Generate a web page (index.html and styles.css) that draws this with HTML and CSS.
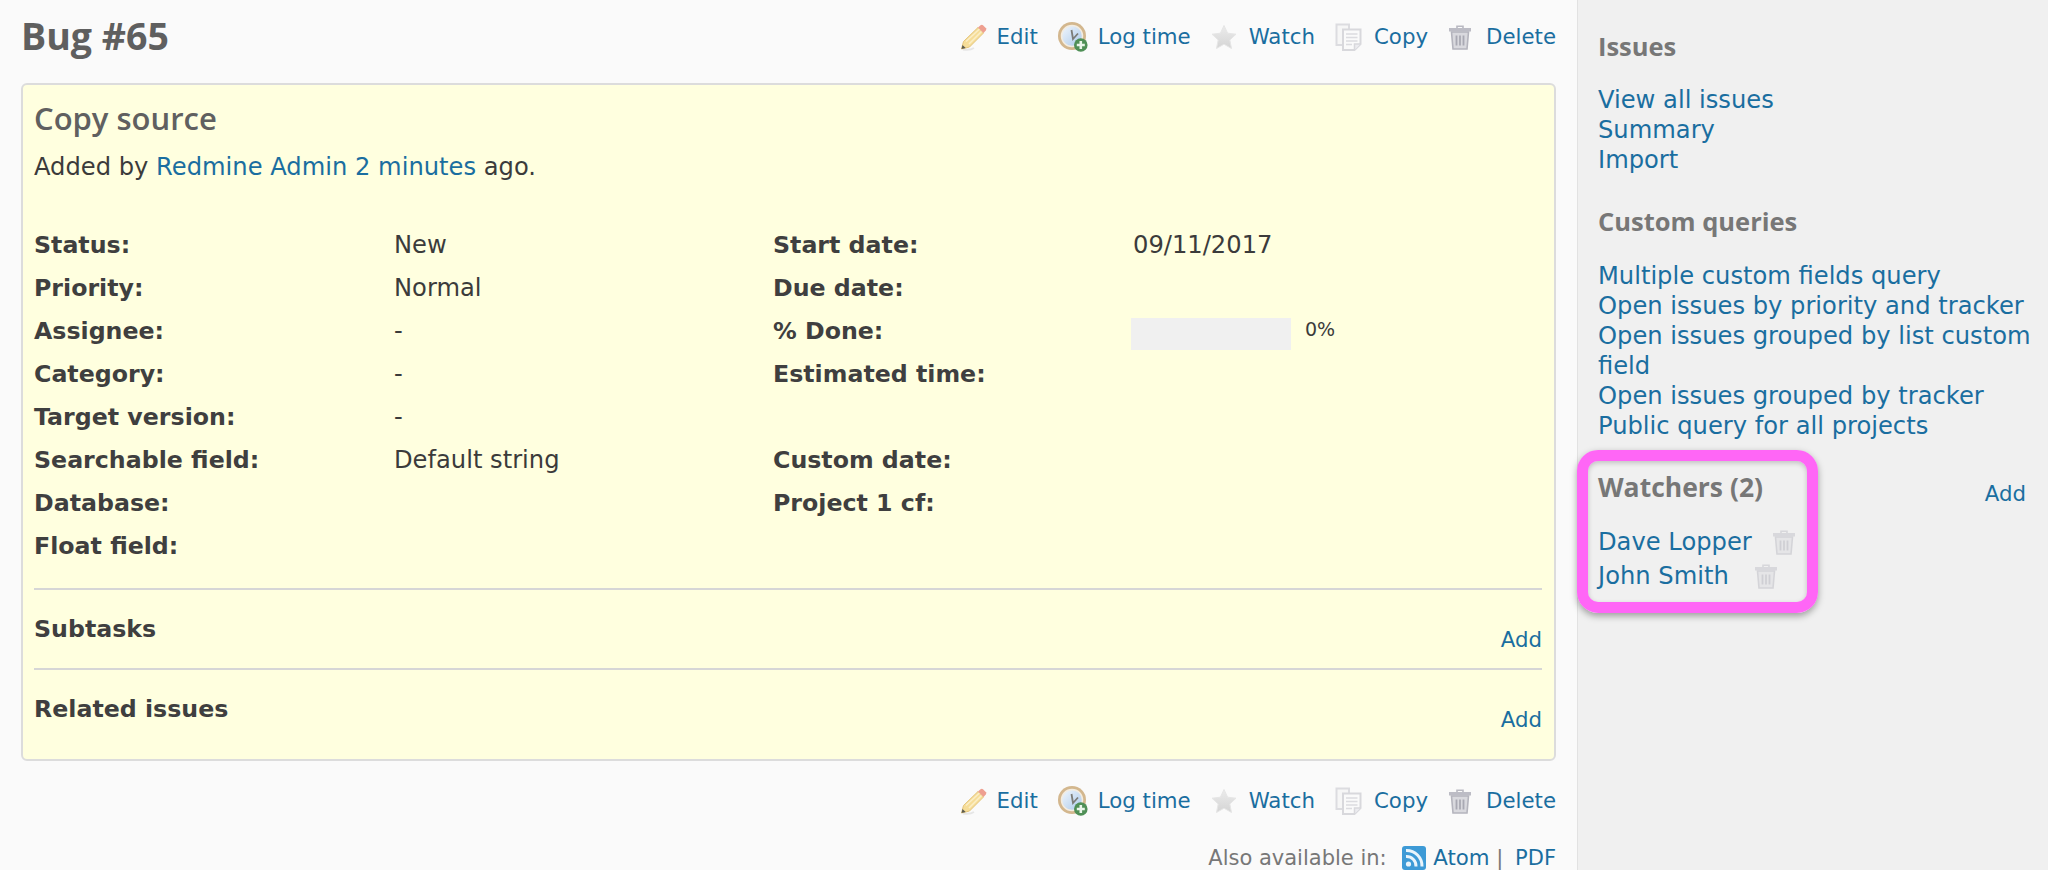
FILE: index.html
```html
<!DOCTYPE html>
<html lang="en">
<head>
<meta charset="utf-8">
<title>Bug #65</title>
<link rel="stylesheet" href="styles.css">
</head>
<body>
<svg class="defs" width="0" height="0" aria-hidden="true">
  <defs>
    <linearGradient id="starfill" x1="0" y1="0" x2="0" y2="1"><stop offset="0" stop-color="#ececec"/><stop offset="1" stop-color="#d4d4d4"/></linearGradient>
    <linearGradient id="bluefill" x1="0" y1="0" x2="1" y2="1"><stop offset="0" stop-color="#f2f7fc"/><stop offset="1" stop-color="#a9c8ea"/></linearGradient>
    <symbol id="i-edit" viewBox="0 0 27 27">
      <path d="M3 25.5 Q10 26.5 14 24" stroke="#e6e6e6" stroke-width="2" fill="none"/>
      <path d="M1.5 25 L3.5 17.5 L18 3.5 L23.5 9 L9.5 23 Z" fill="#f6dd98" stroke="#e4c57c" stroke-width="1"/>
      <path d="M6 17.5 L19.5 5 M9 20 L21.5 7.5" stroke="#fbeec6" stroke-width="1.5"/>
      <path d="M18 3.5 L20.5 1.2 Q22 0.4 23 1.2 L26 4.2 Q26.6 5.4 25.8 6.6 L23.5 9 Z" fill="#ee9f90"/>
      <path d="M1.5 25 L2.5 21 L5.7 24 Z" fill="#5c5c50"/>
    </symbol>
    <symbol id="i-time" viewBox="0 0 30 30">
      <circle cx="14" cy="14" r="14" fill="#d3b78e"/>
      <circle cx="14" cy="14" r="10.5" fill="url(#bluefill)" stroke="#f3ece0" stroke-width="1.5"/>
      <path d="M13.5 8 L15 17 L20 11.5" stroke="#7c7c78" stroke-width="1.8" fill="none"/>
      <circle cx="22.8" cy="23" r="6.8" fill="#4f8f56"/>
      <path d="M22.8 19 V27 M18.8 23 H26.8" stroke="#eaf5ea" stroke-width="2.6"/>
    </symbol>
    <symbol id="i-star" viewBox="0 0 26 26">
      <path d="M13 1.5 L16.6 9.2 L25 10.2 L18.8 16 L20.5 24.5 L13 20.2 L5.5 24.5 L7.2 16 L1 10.2 L9.4 9.2 Z" fill="url(#starfill)" stroke="#e6e6e6" stroke-width="1"/>
    </symbol>
    <symbol id="i-copy" viewBox="0 0 27 28">
      <path d="M1.5 1.5 H14 V22 H1.5 Z" fill="#f6f6f6" stroke="#dcdce0" stroke-width="2"/>
      <path d="M8 6.5 H25.5 V21 L19.5 27 H8 Z" fill="#fafafa" stroke="#d8d8dc" stroke-width="2"/>
      <path d="M25.5 21 H19.5 V27" fill="#ececf0" stroke="#d8d8dc" stroke-width="1.5"/>
      <path d="M11 11 H22.5 M11 14.5 H22.5 M11 18 H22.5 M11 21.5 H17" stroke="#dcdce0" stroke-width="1.6"/>
    </symbol>
    <symbol id="i-trash" viewBox="0 0 24 25">
      <path d="M9 3 V1.2 H15 V3" fill="none" stroke="#b9b9c2" stroke-width="1.6"/>
      <path d="M1 3 H23 V6.5 H1 Z" fill="#bcbcc5"/>
      <path d="M3.5 7 H20.5 L19 24 H5 Z" fill="#d9d9de" stroke="#b4b4bd" stroke-width="1.6"/>
      <path d="M8.5 10.5 V20.5 M12 10.5 V20.5 M15.5 10.5 V20.5" stroke="#a9a9b3" stroke-width="1.8"/>
    </symbol>
    <symbol id="i-rss" viewBox="0 0 24 24">
      <rect width="24" height="24" rx="3" fill="#3d9ad6"/>
      <circle cx="6.5" cy="18" r="2.6" fill="#e9f4fb"/>
      <path d="M4 10.5 A9.5 9.5 0 0 1 14 20.5 M4 4.5 A15.5 15.5 0 0 1 20 20.5" stroke="#e9f4fb" stroke-width="3" fill="none"/>
    </symbol>
  </defs>
</svg>

<div class="layout">
  <main class="main">
    <header class="titlebar">
      <h2 class="title">Bug #65</h2>
      <nav class="toolbar">
        <a class="tool tool-edit" href="#"><svg class="ic ic-edit"><use href="#i-edit"/></svg>Edit</a>
        <a class="tool tool-time" href="#"><svg class="ic ic-time"><use href="#i-time"/></svg>Log time</a>
        <a class="tool" href="#"><svg class="ic ic-star"><use href="#i-star"/></svg>Watch</a>
        <a class="tool" href="#"><svg class="ic ic-copy"><use href="#i-copy"/></svg>Copy</a>
        <a class="tool tool-del" href="#"><svg class="ic ic-trash"><use href="#i-trash"/></svg>Delete</a>
      </nav>
    </header>

    <section class="issue">
      <h3 class="subject">Copy source</h3>
      <p class="author">Added by <a href="#">Redmine Admin</a> <a href="#">2 minutes</a> ago.</p>
      <div class="attributes">
        <b>Status:</b><span>New</span><b>Start date:</b><span>09/11/2017</span>
        <b>Priority:</b><span>Normal</span><b>Due date:</b><span></span>
        <b>Assignee:</b><span>-</span><b>% Done:</b><span class="progress"><i class="bar"></i><small class="pct">0%</small></span>
        <b>Category:</b><span>-</span><b>Estimated time:</b><span></span>
        <b>Target version:</b><span>-</span><span></span><span></span>
        <b>Searchable field:</b><span>Default string</span><b>Custom date:</b><span></span>
        <b>Database:</b><span></span><b>Project 1 cf:</b><span></span>
        <b>Float field:</b><span></span><span></span><span></span>
      </div>
      <div class="related">
        <strong>Subtasks</strong><a class="add" href="#">Add</a>
      </div>
      <div class="related">
        <strong>Related issues</strong><a class="add" href="#">Add</a>
      </div>
    </section>

    <nav class="toolbar bottom">
      <a class="tool tool-edit" href="#"><svg class="ic ic-edit"><use href="#i-edit"/></svg>Edit</a>
      <a class="tool tool-time" href="#"><svg class="ic ic-time"><use href="#i-time"/></svg>Log time</a>
      <a class="tool" href="#"><svg class="ic ic-star"><use href="#i-star"/></svg>Watch</a>
      <a class="tool" href="#"><svg class="ic ic-copy"><use href="#i-copy"/></svg>Copy</a>
      <a class="tool tool-del" href="#"><svg class="ic ic-trash"><use href="#i-trash"/></svg>Delete</a>
    </nav>
    <p class="formats">Also available in: <a class="atom" href="#"><svg class="rss"><use href="#i-rss"/></svg>Atom</a> <span class="sep">|</span> <a href="#">PDF</a></p>
  </main>

  <aside class="sidebar">
    <h3 class="side-h first">Issues</h3>
    <ul class="links">
      <li><a href="#">View all issues</a></li>
      <li><a href="#">Summary</a></li>
      <li><a href="#">Import</a></li>
    </ul>
    <h3 class="side-h">Custom queries</h3>
    <ul class="links">
      <li><a href="#">Multiple custom fields query</a></li>
      <li><a href="#">Open issues by priority and tracker</a></li>
      <li><a href="#">Open issues grouped by list custom field</a></li>
      <li><a href="#">Open issues grouped by tracker</a></li>
      <li><a href="#">Public query for all projects</a></li>
    </ul>
    <div class="watch-head">
      <h3 class="side-h bold">Watchers (2)</h3>
      <a class="add" href="#">Add</a>
    </div>
    <ul class="watchers">
      <li><a href="#">Dave Lopper</a><svg class="del"><use href="#i-trash"/></svg></li>
      <li><a href="#">John Smith</a><svg class="del"><use href="#i-trash"/></svg></li>
    </ul>
    <div class="highlight"></div>
  </aside>
</div>
</body>
</html>
```
FILE: styles.css
```css
* { box-sizing: border-box; }
html, body { margin: 0; padding: 0; height: 870px; overflow: hidden; }
body {
  font-family: "DejaVu Sans", Verdana, sans-serif;
  font-size: 24.2px;
  color: #3b3b3b;
  background: #fafafa;
}
a { color: #1a6ea0; text-decoration: none; }
.defs { position: absolute; }
.layout { display: flex; height: 870px; }

.main { width: 1577px; flex: none; padding: 0 21px 0 21px; background: #fafafa; }
.titlebar { display: flex; justify-content: space-between; height: 83px; }
.title {
  margin: 13px 0 0;
  font-family: "Open Sans", "Noto Sans", sans-serif;
  font-size: 37.5px;
  line-height: 46px;
  font-weight: 700;
  color: #5f5f5f;
}
.toolbar { display: flex; justify-content: flex-end; gap: 20px; height: 34px; margin-top: 20px; font-size: 21.3px; }
.toolbar.bottom { margin-top: 23px; }
.tool { display: flex; align-items: center; gap: 12px; line-height: 34px; }
.tool-edit { gap: 9px; }
.tool-time { gap: 10px; }
.tool-del { gap: 14px; }
.ic { flex: none; }
.ic-edit { width: 27px; height: 27px; }
.ic-time { width: 30px; height: 30px; }
.ic-star { width: 26px; height: 26px; }
.ic-copy { width: 27px; height: 28px; }
.ic-trash { width: 24px; height: 25px; }

.issue {
  height: 678px;
  padding: 14px 12px 0 11px;
  border: 2px solid #dcdcdc;
  border-radius: 6px;
  background: #ffffdf;
}
.subject {
  margin: 0;
  font-family: "Open Sans", "Noto Sans", sans-serif;
  font-size: 31px;
  line-height: 38px;
  font-weight: 600;
  color: #606060;
}
.author { margin: 16px 0 0; line-height: 28px; }
.attributes {
  display: grid;
  grid-template-columns: 360px 379px 360px 1fr;
  grid-auto-rows: 43px;
  align-items: center;
  margin-top: 42px;
}
.attributes b { color: #3f3f3f; font-size: 23.7px; }
.progress { display: flex; align-items: center; gap: 14px; margin-left: -2px; }
.bar { display: block; width: 160px; height: 32px; background: #f0f0f0; margin-top: 7px; }
.pct { font-size: 19px; margin-top: -4px; }
.related {
  display: flex;
  justify-content: space-between;
  height: 80px;
  padding-top: 25px;
  line-height: 28px;
  border-top: 2px solid #d6d6d6;
}
.attributes + .related { margin-top: 21px; }
.related strong { color: #3f3f3f; font-size: 23.7px; }
.add { font-size: 21.3px; }
.related .add { margin-top: 11px; }

.formats { margin: 26px 0 0; text-align: right; color: #777; font-size: 21px; line-height: 28px; }
.atom { display: inline-flex; align-items: center; gap: 7px; margin-left: 9px; font-size: 21.3px; vertical-align: bottom; }
.rss { width: 24px; height: 24px; }
.sep { margin: 0 5px 0 0; }

.sidebar {
  position: relative;
  flex: 1;
  padding: 31px 22px 0 20px;
  background: #f0f0f0;
  border-left: 1px solid #e2e2e2;
}
.side-h {
  margin: 31px 0 0;
  font-family: "Open Sans", "Noto Sans", sans-serif;
  font-size: 25.5px;
  line-height: 30px;
  font-weight: 700;
  color: #777;
}
.side-h.first { margin-top: 0; }
.side-h.bold { margin: 0; font-size: 26.5px; }
.links { list-style: none; margin: 25px -14px 0 0; padding: 0; line-height: 30px; }
.side-h.first + .links { margin-top: 24px; }
.watch-head { display: flex; justify-content: space-between; margin-top: 31px; line-height: 30px; }
.watch-head .add { margin-top: 7px; }
.watchers { list-style: none; margin: 16px 0 0; padding: 0; line-height: 34px; }
.watchers li { display: flex; align-items: center; gap: 20px; height: 34px; }
.watchers li + li { gap: 25px; }
.del { width: 24px; height: 25px; opacity: .45; }
.highlight {
  position: absolute;
  left: -1px;
  top: 450px;
  width: 241px;
  height: 163px;
  border: 11px solid #ff66f6;
  border-radius: 21px;
  box-shadow: 0 3px 7px rgba(0, 0, 0, .35), inset 0 2px 5px rgba(0, 0, 0, .2);
}
```
